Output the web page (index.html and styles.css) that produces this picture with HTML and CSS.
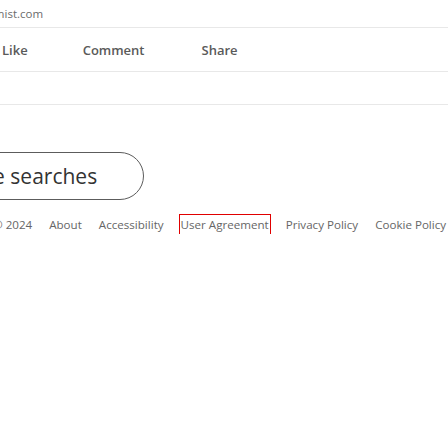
FILE: index.html
```html
<!DOCTYPE html>
<html>
<head>
<meta charset="utf-8">
<link rel="stylesheet" href="styles.css">
</head>
<body>
<div class="top">
  <div class="source">economist.com</div>
</div>
<div class="actions">
  <span class="act act-like">Like</span>
  <span class="act act-comment">Comment</span>
  <span class="act act-share">Share</span>
</div>
<div class="empty"></div>
<div class="more">
  <button class="pill">More searches</button>
</div>
<footer class="footer">
  <span class="fitem">© 2024</span>
  <a class="fitem">About</a>
  <a class="fitem">Accessibility</a>
  <a class="fitem focus">User Agreement</a>
  <a class="fitem">Privacy Policy</a>
  <a class="fitem">Cookie Policy</a>
</footer>
</body>
</html>
```
FILE: styles.css
```css
html, body {
  margin: 0;
  padding: 0;
  background: #fff;
  font-family: "Open Sans", "Noto Sans", sans-serif;
  overflow: hidden;
}
.top {
  height: 27px;
  border-bottom: 1px solid #e8e8e8;
}
.source {
  margin-left: -39px;
  padding-top: 6px;
  font-size: 11.5px;
  line-height: 16px;
  color: #6b6b6b;
  white-space: nowrap;
}
.actions {
  display: flex;
  align-items: center;
  height: 43px;
  border-bottom: 1px solid #e8e8e8;
}
.act {
  font-size: 13px;
  font-weight: 600;
  color: #5a5a5a;
  line-height: 20px;
}
.act-like { margin-left: 2px; }
.act-comment { margin-left: 55px; }
.act-share { margin-left: 57px; }
.empty {
  height: 32px;
  border-bottom: 1px solid #e8e8e8;
}
.more {
  margin-top: 47px;
  margin-left: -68px;
}
.pill {
  display: block;
  box-sizing: border-box;
  width: 212px;
  height: 48px;
  padding: 0 0 0 20px;
  text-align: left;
  border: 1px solid #5c5c5c;
  border-radius: 24px;
  background: #fff;
  font-family: inherit;
  font-size: 21px;
  color: #333;
  white-space: nowrap;
}
.footer {
  display: flex;
  align-items: center;
  gap: 17px;
  margin-top: 16px;
  margin-left: -7px;
  font-size: 11.6px;
  line-height: 18px;
  color: #666;
}
.fitem {
  white-space: nowrap;
}
.focus {
  outline: 1px solid #e00000;
  outline-offset: 1px;
}
```
